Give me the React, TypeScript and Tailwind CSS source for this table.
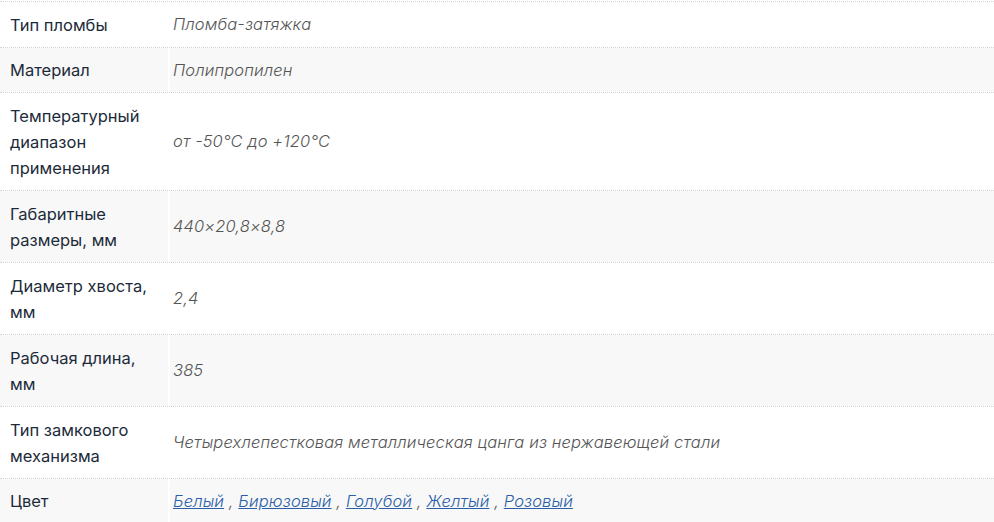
import React from "react";

const rows: { label: string[]; value: React.ReactNode; h: string }[] = [
  { label: ["Тип пломбы"], value: "Пломба-затяжка", h: "h-[46px]" },
  { label: ["Материал"], value: "Полипропилен", h: "h-[45px]" },
  { label: ["Температурный", "диапазон", "применения"], value: "от -50°C до +120°C", h: "h-[98px]" },
  { label: ["Габаритные", "размеры, мм"], value: "440×20,8×8,8", h: "h-[72px]" },
  { label: ["Диаметр хвоста,", "мм"], value: "2,4", h: "h-[72px]" },
  { label: ["Рабочая длина,", "мм"], value: "385", h: "h-[72px]" },
  { label: ["Тип замкового", "механизма"], value: "Четырехлепестковая металлическая цанга из нержавеющей стали", h: "h-[72px]" },
];

const colors = ["Белый", "Бирюзовый", "Голубой", "Желтый", "Розовый"];

export default function App() {
  return (
    <div className="w-[994px] h-[522px] overflow-hidden bg-white pt-[1px]" style={{ fontFamily: "Inter, 'Noto Sans', sans-serif" }}>
      {rows.map((r, i) => (
        <div
          key={i}
          className={`flex gap-[2px] border-t border-dotted border-[#d4d4d4] ${r.h}`}
        >
          <div className={`w-[168px] shrink-0 flex flex-col justify-center pl-[10px] text-[16.5px] leading-[26px] text-[#1c2b3a] ${i % 2 === 1 ? "bg-[#f8f8f8]" : "bg-white"}`}>
            {r.label.map((l, j) => (
              <div key={j}>{l}</div>
            ))}
          </div>
          <div className={`flex-1 flex items-center pl-[3px] text-[16.5px] tracking-[0.12px] italic font-light text-[#555555] ${i % 2 === 1 ? "bg-[#f8f8f8]" : "bg-white"}`}>
            {r.value}
          </div>
        </div>
      ))}
      <div className="flex gap-[2px] border-t border-dotted border-[#d4d4d4] h-[45px]">
        <div className="w-[168px] shrink-0 flex items-center pl-[10px] text-[16.5px] leading-[26px] text-[#1c2b3a] bg-[#f8f8f8]">
          Цвет
        </div>
        <div className="flex-1 flex items-center pl-[3px] text-[16.5px] tracking-[0.12px] italic font-light text-[#555555] bg-[#f8f8f8] whitespace-pre">
          {colors.map((c, i) => (
            <React.Fragment key={c}>
              <a href="#" className="text-[#2a5ea8] underline">{c}</a>
              {i < colors.length - 1 ? " , " : ""}
            </React.Fragment>
          ))}
        </div>
      </div>
    </div>
  );
}
